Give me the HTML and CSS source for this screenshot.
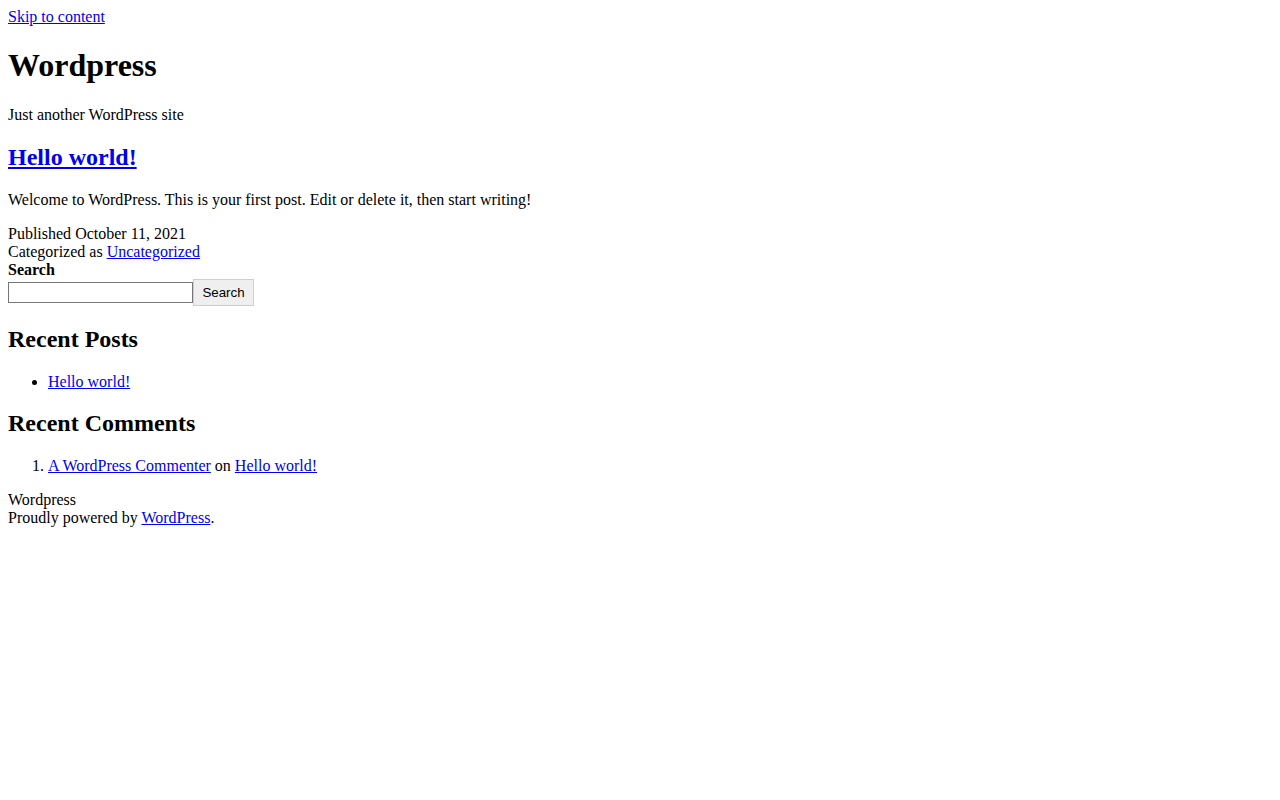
FILE: index.html
```html
<!DOCTYPE html>
<html lang="en">
<head>
<meta charset="utf-8">
<title>Wordpress – Just another WordPress site</title>
<link rel="stylesheet" href="styles.css">
</head>
<body class="page">
<a class="skip-link" href="#content">Skip to content</a>
<header class="site-header">
  <h1 class="site-title">Wordpress</h1>
  <p class="site-description">Just another WordPress site</p>
</header>
<main id="content" class="site-main">
  <article class="post">
    <h2 class="entry-title"><a href="#">Hello world!</a></h2>
    <div class="entry-content">
      <p>Welcome to WordPress. This is your first post. Edit or delete it, then start writing!</p>
    </div>
    <footer class="entry-footer">
      <span class="posted-on">Published <time>October 11, 2021</time></span>
      <div class="post-taxonomies"><span class="cat-links">Categorized as <a href="#">Uncategorized</a></span></div>
    </footer>
  </article>
</main>
<aside class="widget-area">
  <form class="search-form" role="search">
    <label class="search-label" for="s">Search</label>
    <div class="search-wrapper">
      <input class="search-input" type="search" id="s"><button class="search-button" type="submit">Search</button>
    </div>
  </form>
  <section class="widget">
    <h2 class="widget-title">Recent Posts</h2>
    <ul class="widget-list">
      <li><a href="#">Hello world!</a></li>
    </ul>
  </section>
  <section class="widget">
    <h2 class="widget-title">Recent Comments</h2>
    <ol class="widget-list">
      <li><a href="#">A WordPress Commenter</a> on <a href="#">Hello world!</a></li>
    </ol>
  </section>
</aside>
<footer class="site-footer">
  <div class="site-name">Wordpress</div>
  <div class="powered-by">Proudly powered by <a href="#">WordPress</a>.</div>
</footer>
</body>
</html>
```
FILE: styles.css
```css
.page {
  margin: 8px;
  font-family: "Liberation Serif", "Times New Roman", serif;
  font-size: 16px;
  color: #000;
  background: #fff;
}

.page a {
  color: #0000ee;
}

.site-title {
  font-size: 32px;
  margin: 21.44px 0;
}

.site-description {
  margin: 16px 0;
}

.entry-title,
.widget-title {
  font-size: 24px;
  margin: 19.92px 0;
}

.entry-content p {
  margin: 16px 0;
}

.search-form {
  margin: 0;
}

.search-label {
  font-weight: bold;
  display: block;
}

.search-wrapper {
  display: block;
}

.search-input {
  font-family: "Liberation Sans", Arial, sans-serif;
  font-size: 13.333px;
  width: 185px;
  height: 21px;
  box-sizing: border-box;
  border: 1px solid #767676;
  padding: 1px 2px;
  margin: 0;
  vertical-align: baseline;
}

.search-button {
  font-family: "Liberation Sans", Arial, sans-serif;
  font-size: 13.333px;
  width: 61px;
  height: 27px;
  box-sizing: border-box;
  padding: 1px 6px;
  margin: 0;
  background: #efefef;
  border: 1px solid #cfcfcf;
  color: #000;
}

.widget-list {
  margin: 16px 0;
  padding-left: 40px;
}
```
